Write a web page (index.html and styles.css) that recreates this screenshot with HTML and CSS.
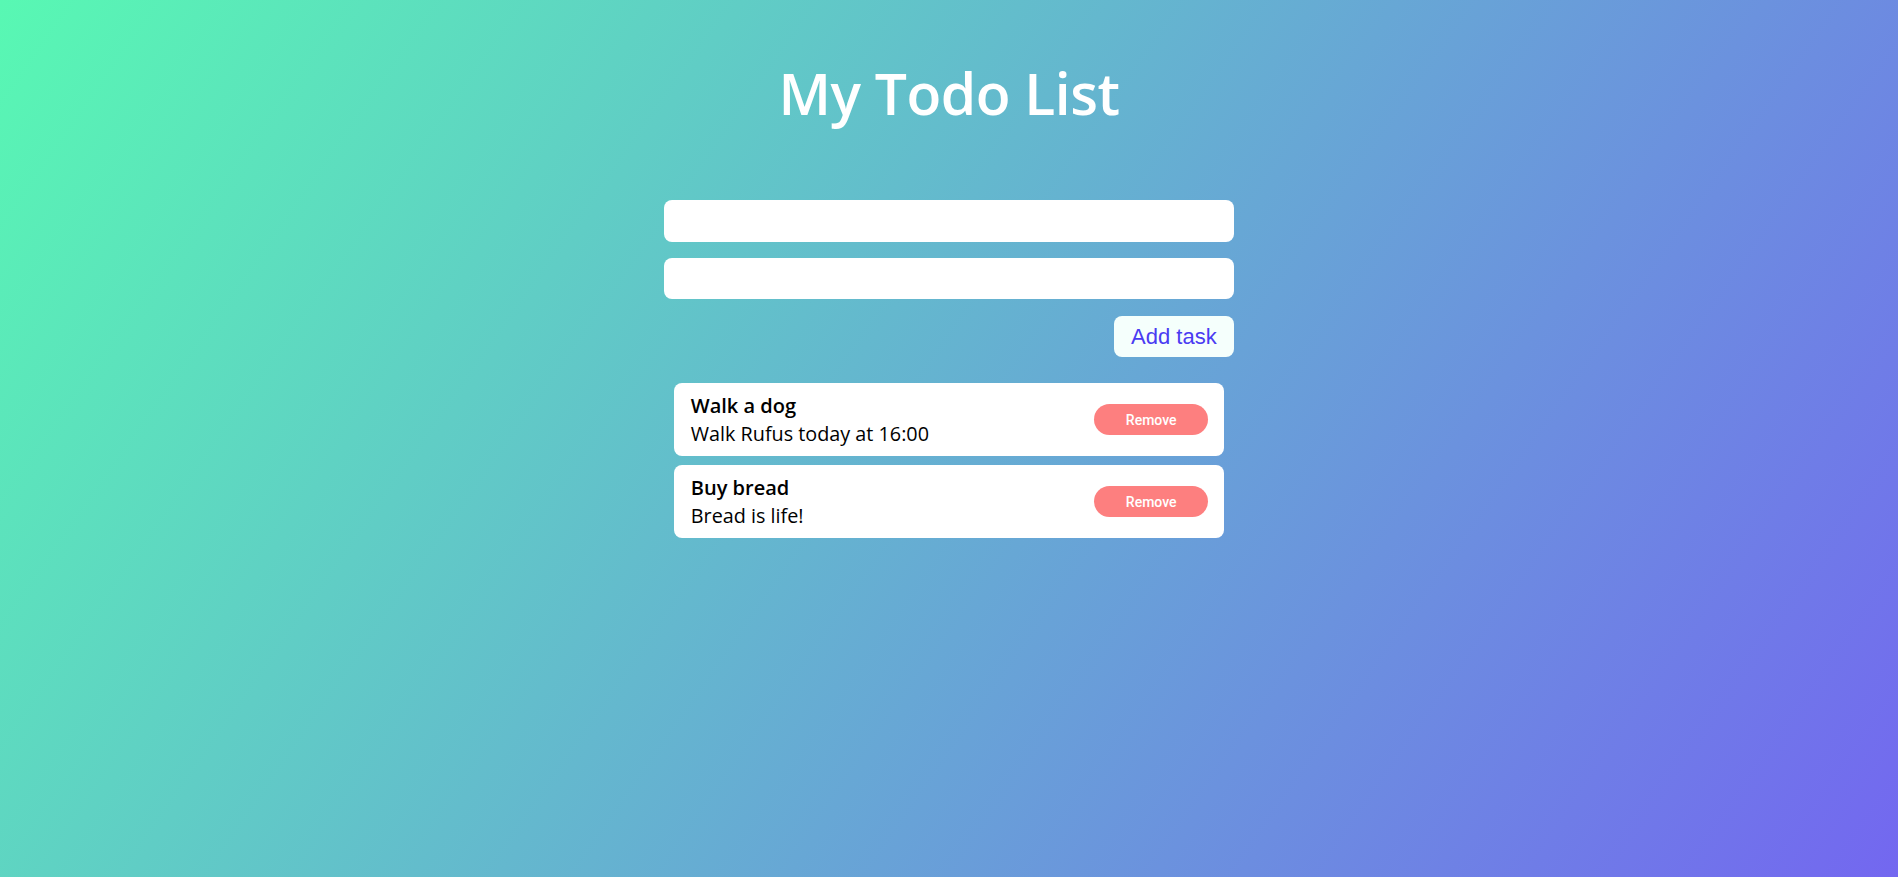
FILE: index.html
```html
<!DOCTYPE html>
<html lang="en">
<head>
<meta charset="utf-8">
<title>My Todo List</title>
<link rel="stylesheet" href="styles.css">
</head>
<body>
<main class="app">
  <h1 class="title">My Todo List</h1>
  <form class="form">
    <input class="field" type="text">
    <input class="field field-second" type="text">
    <button class="add-btn" type="button">Add task</button>
  </form>
  <ul class="list">
    <li class="card">
      <div class="card-text">
        <div class="card-title">Walk a dog</div>
        <div class="card-desc">Walk Rufus today at 16:00</div>
      </div>
      <button class="remove-btn" type="button">Remove</button>
    </li>
    <li class="card">
      <div class="card-text">
        <div class="card-title">Buy bread</div>
        <div class="card-desc">Bread is life!</div>
      </div>
      <button class="remove-btn" type="button">Remove</button>
    </li>
  </ul>
</main>
</body>
</html>
```
FILE: styles.css
```css
html, body {
  margin: 0;
  padding: 0;
}
body {
  min-height: 100vh;
  background: linear-gradient(125deg, #58f8b3 0%, #7367f0 100%);
  font-family: "Open Sans", "Liberation Sans", sans-serif;
}
.app {
  width: 30vw;
  margin: 0 auto;
  padding-top: 58px;
}
.title {
  margin: 0;
  text-align: center;
  color: #ffffff;
  font-size: 57px;
  font-weight: 600;
  line-height: 70px;
  letter-spacing: -0.5px;
}
.form {
  margin-top: 72px;
  display: flex;
  flex-direction: column;
  gap: 16px;
}
.field {
  display: block;
  box-sizing: border-box;
  width: 100%;
  height: 42px;
  border: none;
  border-radius: 8px;
  background: #ffffff;
  padding: 0 12px;
  outline: none;
}
.field-second {
  height: 41px;
}
.add-btn {
  align-self: flex-end;
  height: 41px;
  box-sizing: border-box;
  padding: 0 17px;
  border: none;
  border-radius: 8px;
  background: #f5fffc;
  color: #4a3bf2;
  font-family: "Liberation Sans", Arial, sans-serif;
  font-size: 22px;
  margin-top: 1px;
}
.list {
  list-style: none;
  width: 29vw;
  margin: 26px auto 0;
  padding: 0;
  display: flex;
  flex-direction: column;
  gap: 9px;
}
.card {
  box-sizing: border-box;
  height: 73px;
  background: #ffffff;
  border-radius: 8px;
  padding: 0 16px 0 17px;
  display: flex;
  align-items: center;
  justify-content: space-between;
}
.card-title {
  font-size: 20px;
  font-weight: 600;
  line-height: 28px;
  color: #000000;
}
.card-desc {
  font-size: 19.8px;
  font-weight: 400;
  line-height: 28px;
  color: #000000;
}
.remove-btn {
  width: 114px;
  height: 31px;
  border: none;
  border-radius: 16px;
  background: #fd7f7f;
  color: #ffffff;
  font-family: Roboto, "Liberation Sans", sans-serif;
  font-size: 14px;
  font-weight: 500;
}
```
